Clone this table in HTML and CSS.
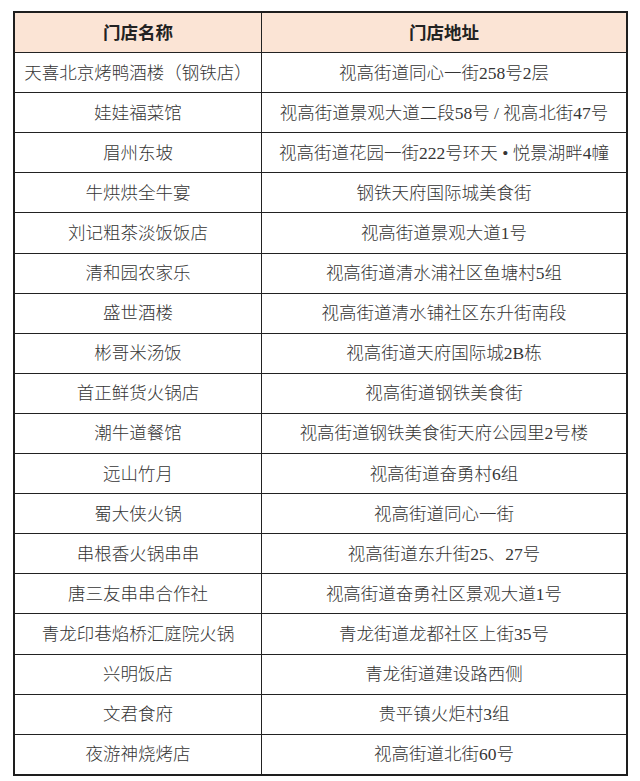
FILE: index.html
```html
<!DOCTYPE html>
<html lang="zh-CN">
<head>
<meta charset="utf-8">
<link rel="stylesheet" href="styles.css">
</head>
<body>
<table class="stores">
<thead>
<tr><th class="c-name">门店名称</th><th class="c-addr">门店地址</th></tr>
</thead>
<tbody>
<tr><td>天喜北京烤鸭酒楼（钢铁店）</td><td>视高街道同心一街258号2层</td></tr>
<tr><td>娃娃福菜馆</td><td>视高街道景观大道二段58号 / 视高北街47号</td></tr>
<tr><td>眉州东坡</td><td>视高街道花园一街222号环天 • 悦景湖畔4幢</td></tr>
<tr><td>牛烘烘全牛宴</td><td>钢铁天府国际城美食街</td></tr>
<tr><td>刘记粗茶淡饭饭店</td><td>视高街道景观大道1号</td></tr>
<tr><td>清和园农家乐</td><td>视高街道清水浦社区鱼塘村5组</td></tr>
<tr><td>盛世酒楼</td><td>视高街道清水铺社区东升街南段</td></tr>
<tr><td>彬哥米汤饭</td><td>视高街道天府国际城2B栋</td></tr>
<tr><td>首正鲜货火锅店</td><td>视高街道钢铁美食街</td></tr>
<tr><td>潮牛道餐馆</td><td>视高街道钢铁美食街天府公园里2号楼</td></tr>
<tr><td>远山竹月</td><td>视高街道奋勇村6组</td></tr>
<tr><td>蜀大侠火锅</td><td>视高街道同心一街</td></tr>
<tr><td>串根香火锅串串</td><td>视高街道东升街25、27号</td></tr>
<tr><td>唐三友串串合作社</td><td>视高街道奋勇社区景观大道1号</td></tr>
<tr><td>青龙印巷焰桥汇庭院火锅</td><td>青龙街道龙都社区上街35号</td></tr>
<tr><td>兴明饭店</td><td>青龙街道建设路西侧</td></tr>
<tr><td>文君食府</td><td>贵平镇火炬村3组</td></tr>
<tr><td>夜游神烧烤店</td><td>视高街道北街60号</td></tr>
</tbody>
</table>
</body>
</html>
```
FILE: styles.css
```css
html, body {
  margin: 0;
  padding: 0;
  background: #ffffff;
}
body {
  padding: 11px 0 0 13px;
  font-family: "Liberation Serif", "Noto Sans CJK SC", serif;
  color: #353535;
}
.stores {
  border-collapse: collapse;
  border: 2px solid #1e1e1e;
  table-layout: fixed;
  width: 612px;
}
.stores th, .stores td {
  border: 1.5px solid #222;
  height: 39.1px;
  padding: 0;
  text-align: center;
  vertical-align: middle;
  font-size: 17.5px;
  line-height: 22px;
  font-weight: 300;
  white-space: nowrap;
}
.stores th {
  background: #fbe4d5;
  font-weight: 700;
  color: #222;
}
.c-name { width: 246px; }
.c-addr { width: 364px; }
```
